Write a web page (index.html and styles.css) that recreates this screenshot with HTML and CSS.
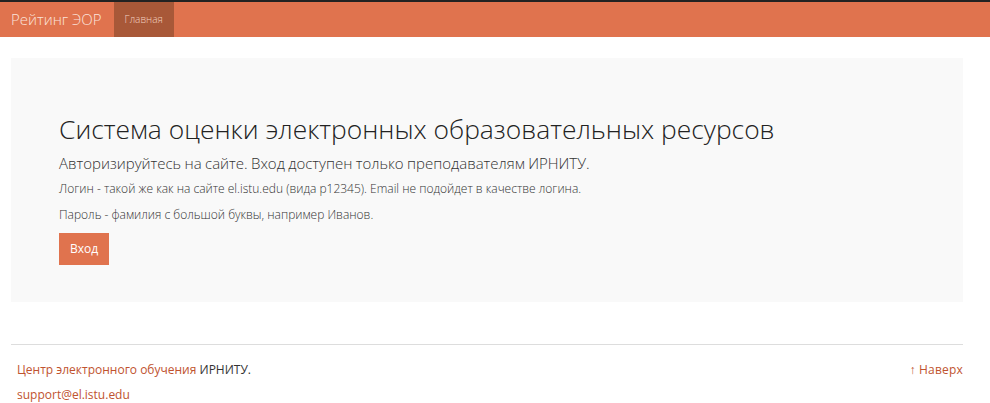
FILE: index.html
```html
<!DOCTYPE html>
<html lang="ru">
<head>
    <meta charset="UTF-8">
    <meta name="viewport" content="width=device-width, initial-scale=1.0">
    <title>Рейтинг ЭОР</title>
    <link rel="stylesheet" href="styles.css">
</head>
<body>

<nav class="navbar">
    <a class="brand" href="#">Рейтинг ЭОР</a>
    <a class="nav-link active" href="#">Главная</a>
</nav>

<div class="container">
    <div class="jumbotron">
        <h1>Система оценки электронных образовательных ресурсов</h1>
        <p class="lead">Авторизируйтесь на сайте. Вход доступен только преподавателям ИРНИТУ.</p>
        <p>Логин - такой же как на сайте el.istu.edu (вида p12345). Email не подойдет в качестве логина.</p>
        <p>Пароль - фамилия с большой буквы, например Иванов.</p>
        <a class="btn" href="#">Вход</a>
    </div>

    <footer class="footer">
        <div class="footer-left">
            <p><a href="#">Центр электронного обучения</a> ИРНИТУ.</p>
            <p><a href="#">support@el.istu.edu</a></p>
        </div>
        <a class="to-top" href="#">&uarr;&nbsp;Наверх</a>
    </footer>
</div>

</body>
</html>
```

FILE: styles.css
```css
body {
    margin: 0;
    font-family: "Open Sans", sans-serif;
    font-size: 12px;
    color: #333;
    background-color: #fff;
}

a {
    text-decoration: none;
    color: #c0532f;
}

.navbar {
    display: flex;
    height: 35px;
    background-color: #e0734e;
    border-top: 2px solid #222;
}

.brand {
    padding: 0 12px 0 11px;
    line-height: 35px;
    font-size: 15px;
    font-weight: 300;
    color: #fbe3dc;
}

.nav-link {
    padding: 0 11px;
    line-height: 35px;
    font-size: 10px;
    font-weight: 300;
    color: #f3d2c2;
}

.nav-link.active {
    background-color: #a85838;
}

.container {
    width: 952px;
    margin: 0 0 0 11px;
}

.jumbotron {
    margin-top: 21px;
    padding: 52px 48px 37px;
    background-color: #f9f9f9;
}

h1 {
    margin: 0 0 3px;
    font-size: 26.4px;
    font-weight: 300;
    line-height: 38px;
    color: #222;
}

.lead {
    margin: 0 0 5px;
    font-size: 15px;
    font-weight: 300;
    word-spacing: -0.5px;
    line-height: 24px;
    color: #333;
}

.jumbotron p {
    margin-top: 0;
}

.jumbotron p:not(.lead) {
    margin-bottom: 8px;
    font-weight: 300;
    line-height: 18px;
}

.btn {
    display: inline-block;
    margin-top: 1px;
    padding: 7px 11px;
    font-size: 12px;
    line-height: 18px;
    color: #fff;
    background-color: #e0734e;
}

.footer {
    display: flex;
    justify-content: space-between;
    margin-top: 42px;
    padding-top: 16px;
    border-top: 1px solid #ddd;
}

.footer p {
    margin: 0 0 7px 6px;
    line-height: 18px;
}

.to-top {
    line-height: 18px;
    letter-spacing: 0.2px;
    color: #c0532f;
}
```
